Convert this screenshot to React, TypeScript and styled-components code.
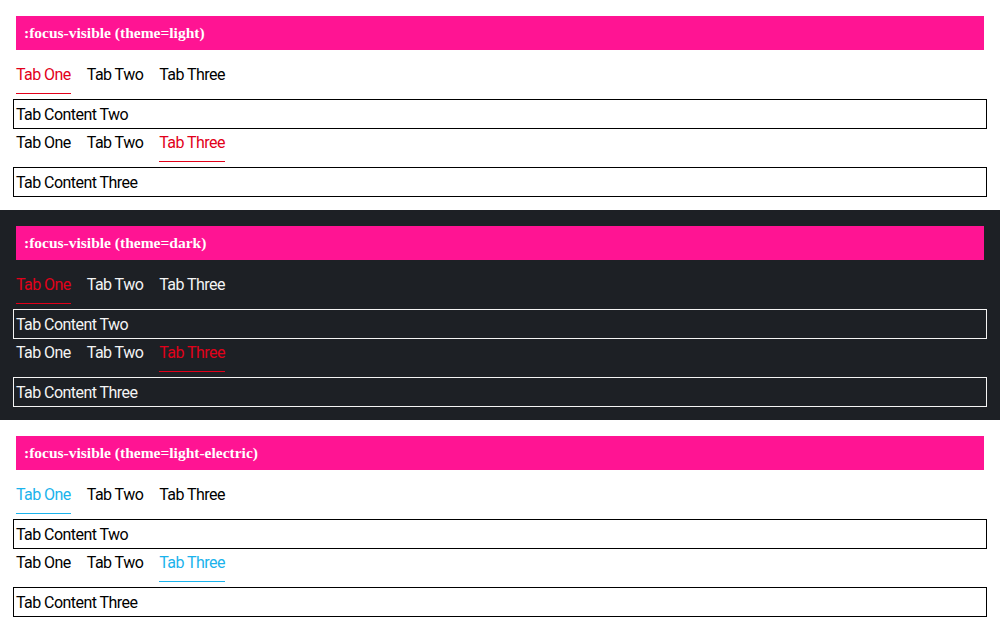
import React from "react";
import styled, { createGlobalStyle } from "styled-components";

interface Theme {
  name: string;
  bg: string;
  text: string;
  border: string;
  accent: string;
}

const themes: Theme[] = [
  { name: "light", bg: "#ffffff", text: "#000000", border: "#000000", accent: "#e2001a" },
  { name: "dark", bg: "#1d2025", text: "#f4f4f4", border: "#f4f4f4", accent: "#e2001a" },
  { name: "light-electric", bg: "#ffffff", text: "#000000", border: "#000000", accent: "#1bb3ec" },
];

const Global = createGlobalStyle`
  body {
    margin: 0;
    background: #fff;
  }
`;

const Section = styled.section<{ $theme: Theme }>`
  background: ${(p) => p.$theme.bg};
  color: ${(p) => p.$theme.text};
  padding: 16px 16px 13px;
  font-family: Roboto, "Liberation Sans", sans-serif;
  font-size: 16px;
  letter-spacing: -0.55px;
`;

const Heading = styled.h2`
  margin: 0 0 11px;
  height: 34px;
  padding-left: 8px;
  display: flex;
  align-items: center;
  background: #ff1493;
  color: #fff;
  font-family: "Liberation Serif", serif;
  font-weight: bold;
  font-size: 15.5px;
  letter-spacing: 0;
`;

const TabList = styled.div`
  display: flex;
  gap: 16px;
  padding-bottom: 5px;
`;

const Tab = styled.button<{ $active: boolean; $accent: string }>`
  all: unset;
  padding: 2px 0 6px;
  line-height: 24px;
  color: ${(p) => (p.$active ? p.$accent : "inherit")};
  border-bottom: 1px solid ${(p) => (p.$active ? p.$accent : "transparent")};
  cursor: pointer;
`;

const Panel = styled.div<{ $border: string }>`
  margin: 0 -3px;
  padding: 1px 0 0 2px;
  line-height: 27px;
  border: 1px solid ${(p) => p.$border};
`;

const labels = ["Tab One", "Tab Two", "Tab Three"];

interface TabsProps {
  theme: Theme;
  active: number;
  content: string;
}

const Tabs = ({ theme, active, content }: TabsProps) => (
  <>
    <TabList role="tablist">
      {labels.map((l, i) => (
        <Tab key={l} role="tab" $active={i === active} $accent={theme.accent}>
          {l}
        </Tab>
      ))}
    </TabList>
    <Panel role="tabpanel" $border={theme.border}>
      {content}
    </Panel>
  </>
);

export default function App() {
  return (
    <>
      <Global />
      {themes.map((t) => (
        <Section key={t.name} $theme={t}>
          <Heading>:focus-visible (theme={t.name})</Heading>
          <Tabs theme={t} active={0} content="Tab Content Two" />
          <Tabs theme={t} active={2} content="Tab Content Three" />
        </Section>
      ))}
    </>
  );
}
